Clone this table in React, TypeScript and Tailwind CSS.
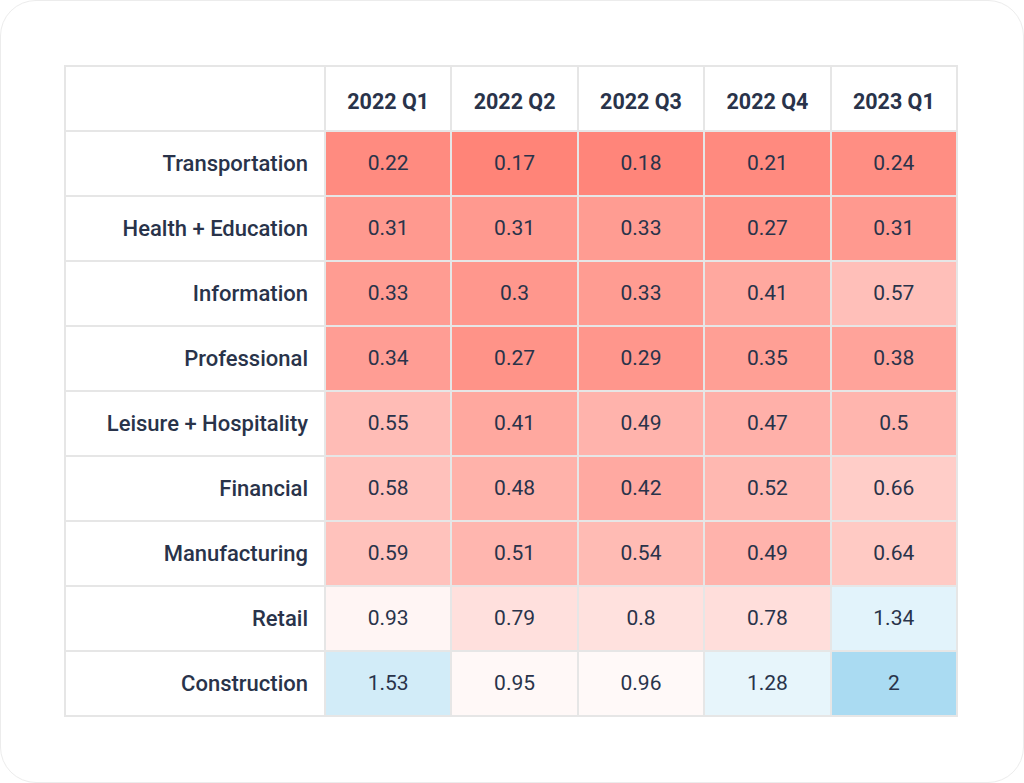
import React from "react";

const quarters = ["2022 Q1", "2022 Q2", "2022 Q3", "2022 Q4", "2023 Q1"];

const rows: { label: string; values: number[] }[] = [
  { label: "Transportation", values: [0.22, 0.17, 0.18, 0.21, 0.24] },
  { label: "Health + Education", values: [0.31, 0.31, 0.33, 0.27, 0.31] },
  { label: "Information", values: [0.33, 0.3, 0.33, 0.41, 0.57] },
  { label: "Professional", values: [0.34, 0.27, 0.29, 0.35, 0.38] },
  { label: "Leisure + Hospitality", values: [0.55, 0.41, 0.49, 0.47, 0.5] },
  { label: "Financial", values: [0.58, 0.48, 0.42, 0.52, 0.66] },
  { label: "Manufacturing", values: [0.59, 0.51, 0.54, 0.49, 0.64] },
  { label: "Retail", values: [0.93, 0.79, 0.8, 0.78, 1.34] },
  { label: "Construction", values: [1.53, 0.95, 0.96, 1.28, 2] },
];

// diverging scale: red below 1, white at 1, blue above
const mix = (a: number[], t: number) =>
  `rgb(${a.map((c) => Math.round(255 - t * (255 - c))).join(",")})`;

const cellColor = (v: number) => {
  if (v < 1) return mix([255, 132, 120], Math.min(1, (1 - v) / 0.83));
  return mix([170, 219, 242], Math.min(1, (v - 1) / 1));
};

const App: React.FC = () => {
  return (
    <div className="w-[1024px] h-[783px] bg-white font-['Roboto',sans-serif] text-[#29334a]">
      <div className="w-full h-full rounded-[36px] border border-[#ececec] pt-[64px] pl-[63px]">
        <div className="w-[894px] grid grid-cols-[258px_repeat(5,1fr)] auto-rows-[63px] gap-[2px] p-[2px] bg-[#e6e6e6]">
          <div className="bg-white" />
          {quarters.map((q) => (
            <div
              key={q}
              className="bg-white flex items-center justify-center pt-[8px] text-[21.5px] font-bold"
            >
              {q}
            </div>
          ))}
          {rows.map((row) => (
            <React.Fragment key={row.label}>
              <div className="bg-white flex items-center justify-end pr-[16px] text-[22px] font-medium">
                {row.label}
              </div>
              {row.values.map((v, i) => (
                <div
                  key={i}
                  className="flex items-center justify-center text-[21px]"
                  style={{ backgroundColor: cellColor(v) }}
                >
                  {v}
                </div>
              ))}
            </React.Fragment>
          ))}
        </div>
      </div>
    </div>
  );
};

export default App;
